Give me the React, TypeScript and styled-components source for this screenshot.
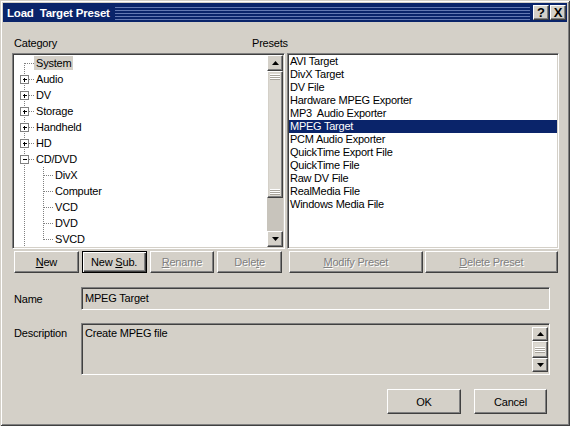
import React from 'react';
import styled, { createGlobalStyle, css } from 'styled-components';

const GlobalStyle = createGlobalStyle`
  html, body {
    margin: 0;
    padding: 0;
    background: #d4d0c8;
  }
  body {
    font-family: 'Liberation Sans', Arial, sans-serif;
    font-size: 11px;
    color: #000;
  }
  * {
    box-sizing: border-box;
  }
`;

const raised = css`
  border: 1px solid;
  border-color: #fff #404040 #404040 #fff;
  box-shadow: inset -1px -1px #808080, inset 1px 1px #d4d0c8;
`;

const sunken = css`
  border: 1px solid;
  border-color: #808080 #fff #fff #808080;
  box-shadow: inset 1px 1px #404040, inset -1px -1px #d4d0c8;
  padding: 1px;
`;

const Window = styled.div`
  width: 570px;
  height: 426px;
  padding: 3px;
  background: #d4d0c8;
  box-shadow: inset 1px 1px #d4d0c8, inset -1px -1px #404040,
    inset 2px 2px #fff, inset -2px -2px #808080;
  display: flex;
  flex-direction: column;
`;

const TitleBar = styled.div`
  height: 19px;
  background: #0a246a;
  display: flex;
  align-items: center;
  padding: 0 1px 0 4px;
`;

const TitleText = styled.span`
  color: #fff;
  font-weight: bold;
  font-size: 11.5px;
  letter-spacing: -0.2px;
  white-space: pre;
`;

const Stripes = styled.div`
  flex: 1;
  height: 14px;
  margin: 0 3px 0 5px;
  background: repeating-linear-gradient(
    to bottom,
    #0a246a 0,
    #0a246a 1px,
    #6479b2 1px,
    #6479b2 2px,
    #0a246a 2px,
    #0a246a 3px
  );
`;

const CaptionButtons = styled.div`
  display: flex;
  gap: 1px;
`;

const CaptionButton = styled.div`
  ${raised};
  width: 16px;
  height: 15px;
  background: #d4d0c8;
  display: flex;
  align-items: center;
  justify-content: center;
  font-weight: bold;
  font-size: 13px;
  line-height: 13px;
`;

const Body = styled.div`
  flex: 1;
  display: flex;
  flex-direction: column;
  padding: 15px 8px 0 9px;
`;

const LabelRow = styled.div`
  display: flex;
  height: 13px;
  line-height: 13px;
  margin-bottom: 3px;
`;

const Caption = styled.span<{ $width?: number; $indent?: number }>`
  letter-spacing: -0.2px;
  ${(p) => p.$width && `width: ${p.$width}px;`}
  margin-left: ${(p) => p.$indent ?? 0}px;
`;

const Panes = styled.div`
  display: flex;
  gap: 2px;
  height: 196px;
`;

const TreeBox = styled.div`
  ${sunken};
  width: 273px;
  background: #fff;
  display: flex;
`;

const TreeList = styled.div`
  flex: 1;
  overflow: hidden;
`;

const TreeRow = styled.div`
  height: 16px;
  display: flex;
  align-items: center;
`;

const TreeLabel = styled.span<{ $selected?: boolean }>`
  height: 14px;
  line-height: 14px;
  padding: 0 2px;
  letter-spacing: -0.2px;
  white-space: nowrap;
  background: ${(p) => (p.$selected ? '#d4d0c8' : 'transparent')};
`;

const ScrollBar = styled.div<{ $inset?: boolean }>`
  width: 16px;
  display: flex;
  flex-direction: column;
  background: #c8c4bc;
  ${(p) =>
    p.$inset &&
    css`
      margin-top: 2px;
      background: transparent;
    `}
`;

const ArrowButton = styled.div<{ $h?: number }>`
  ${raised};
  height: ${(p) => p.$h ?? 16}px;
  background: #d4d0c8;
  display: flex;
  align-items: center;
  justify-content: center;
  flex-shrink: 0;
`;

const grip = css`
  content: '';
  position: absolute;
  left: 2px;
  right: 2px;
  height: 6px;
  background: repeating-linear-gradient(
    to bottom,
    #fff 0,
    #fff 1px,
    #a8a49c 1px,
    #a8a49c 2px
  );
`;

const Thumb = styled.div<{ $h: number; $double?: boolean }>`
  ${raised};
  position: relative;
  height: ${(p) => p.$h}px;
  flex-shrink: 0;
  background: #dcd9d2;
  &::before {
    ${grip};
    top: ${(p) => (p.$double ? 2 : Math.round(p.$h / 2 - 4))}px;
  }
  ${(p) =>
    p.$double &&
    css`
      &::after {
        ${grip};
        bottom: 2px;
      }
    `}
`;

const Track = styled.div`
  flex: 1;
`;

const ListBox = styled.div`
  ${sunken};
  flex: 1;
  background: #fff;
`;

const ListItem = styled.div<{ $selected?: boolean }>`
  height: 13px;
  line-height: 13px;
  padding-left: 1px;
  letter-spacing: -0.25px;
  white-space: pre;
  background: ${(p) => (p.$selected ? '#0a246a' : 'transparent')};
  color: ${(p) => (p.$selected ? '#fff' : '#000')};
`;

const ButtonRow = styled.div`
  display: flex;
  gap: 2px;
  height: 22px;
  margin-top: 2px;
`;

const ButtonGroup = styled.div<{ $width: number; $gap: number; $pad: string }>`
  width: ${(p) => p.$width}px;
  display: flex;
  gap: ${(p) => p.$gap}px;
  padding: ${(p) => p.$pad};
`;

const Button = styled.div<{ $disabled?: boolean; $default?: boolean; $width?: number }>`
  ${raised};
  ${(p) => (p.$width ? `width: ${p.$width}px;` : 'flex: 1;')}
  background: #d4d0c8;
  display: flex;
  align-items: center;
  justify-content: center;
  letter-spacing: -0.2px;
  white-space: nowrap;
  color: ${(p) => (p.$disabled ? '#808080' : '#000')};
  text-shadow: ${(p) => (p.$disabled ? '1px 1px 0 #fff' : 'none')};
  ${(p) =>
    p.$default &&
    css`
      border-color: #000;
      box-shadow: inset 1px 1px #fff, inset -1px -1px #404040,
        inset -2px -2px #808080;
    `}
`;

const Mnemonic = styled.span`
  text-decoration: underline;
  text-decoration-thickness: 1px;
  text-underline-offset: 1px;
`;

const FieldRow = styled.div<{ $top: number; $height: number; $align: string }>`
  display: flex;
  align-items: ${(p) => p.$align};
  margin-top: ${(p) => p.$top}px;
  height: ${(p) => p.$height}px;
`;

const FieldLabel = styled.span<{ $pad?: number }>`
  width: 67px;
  margin-left: 2px;
  letter-spacing: -0.2px;
  padding-top: ${(p) => p.$pad ?? 0}px;
`;

const Field = styled.div`
  ${sunken};
  width: 469px;
  height: 100%;
  background: #d4d0c8;
  display: flex;
`;

const FieldText = styled.div<{ $padTop: number }>`
  flex: 1;
  padding: ${(p) => p.$padTop}px 2px 0 2px;
  letter-spacing: -0.2px;
`;

const Footer = styled.div`
  display: flex;
  justify-content: flex-end;
  gap: 13px;
  height: 25px;
  margin-top: 14px;
  padding-right: 12px;
`;

const Triangle = ({ down }: { down?: boolean }) => (
  <svg width="7" height="4" viewBox="0 0 7 4">
    <polygon points={down ? '0,0 7,0 3.5,4' : '0,4 7,4 3.5,0'} fill="#000" />
  </svg>
);

type Node = {
  label: string;
  level: 1 | 2;
  expander?: 'plus' | 'minus';
  first?: boolean;
  last?: boolean;
  selected?: boolean;
};

const tree: Node[] = [
  { label: 'System', level: 1, first: true, selected: true },
  { label: 'Audio', level: 1, expander: 'plus' },
  { label: 'DV', level: 1, expander: 'plus' },
  { label: 'Storage', level: 1, expander: 'plus' },
  { label: 'Handheld', level: 1, expander: 'plus' },
  { label: 'HD', level: 1, expander: 'plus' },
  { label: 'CD/DVD', level: 1, expander: 'minus' },
  { label: 'DivX', level: 2 },
  { label: 'Computer', level: 2 },
  { label: 'VCD', level: 2 },
  { label: 'DVD', level: 2 },
  { label: 'SVCD', level: 2, last: true },
  { label: 'Web', level: 1, expander: 'plus' },
];

const dot = { stroke: '#808080', strokeDasharray: '1 1', shapeRendering: 'crispEdges' as const };

// dotted tree connectors drawn per row so the lines stay continuous
const Connector = ({ node }: { node: Node }) => {
  const w = node.level === 1 ? 20 : 39;
  return (
    <svg width={w} height="16" viewBox={`0 0 ${w} 16`} style={{ flexShrink: 0 }}>
      <line x1="10.5" y1={node.first ? 8 : 0} x2="10.5" y2="16" {...dot} />
      {node.level === 1 && (
        <line x1={node.expander ? 15 : 11} y1="8.5" x2="20" y2="8.5" {...dot} />
      )}
      {node.level === 2 && (
        <>
          <line x1="29.5" y1="0" x2="29.5" y2={node.last ? 9 : 16} {...dot} />
          <line x1="30" y1="8.5" x2="39" y2="8.5" {...dot} />
        </>
      )}
      {node.expander && (
        <g shapeRendering="crispEdges">
          <rect x="6.5" y="4.5" width="8" height="8" fill="#fff" stroke="#808080" />
          <line x1="8.5" y1="8.5" x2="12.5" y2="8.5" stroke="#000" />
          {node.expander === 'plus' && (
            <line x1="10.5" y1="6.5" x2="10.5" y2="10.5" stroke="#000" />
          )}
        </g>
      )}
    </svg>
  );
};

const presets = [
  'AVI Target',
  'DivX Target',
  'DV File',
  'Hardware MPEG Exporter',
  'MP3  Audio Exporter',
  'MPEG Target',
  'PCM Audio Exporter',
  'QuickTime Export File',
  'QuickTime File',
  'Raw DV File',
  'RealMedia File',
  'Windows Media File',
];

export default function App() {
  return (
    <>
      <GlobalStyle />
      <Window>
        <TitleBar>
          <TitleText>Load  Target Preset</TitleText>
          <Stripes />
          <CaptionButtons>
            <CaptionButton>?</CaptionButton>
            <CaptionButton>X</CaptionButton>
          </CaptionButtons>
        </TitleBar>
        <Body>
          <LabelRow>
            <Caption $width={238} $indent={2}>
              Category
            </Caption>
            <Caption>Presets</Caption>
          </LabelRow>
          <Panes>
            <TreeBox>
              <TreeList>
                {tree.map((n) => (
                  <TreeRow key={n.label}>
                    <Connector node={n} />
                    <TreeLabel $selected={n.selected}>{n.label}</TreeLabel>
                  </TreeRow>
                ))}
              </TreeList>
              <ScrollBar>
                <ArrowButton>
                  <Triangle />
                </ArrowButton>
                <Thumb $h={127} $double />
                <Track />
                <ArrowButton>
                  <Triangle down />
                </ArrowButton>
              </ScrollBar>
            </TreeBox>
            <ListBox>
              {presets.map((p) => (
                <ListItem key={p} $selected={p === 'MPEG Target'}>
                  {p}
                </ListItem>
              ))}
            </ListBox>
          </Panes>
          <ButtonRow>
            <ButtonGroup $width={273} $gap={3} $pad="0 3px 0 2px">
              <Button>
                <span>
                  <Mnemonic>N</Mnemonic>ew
                </span>
              </Button>
              <Button $default>
                <span>
                  New <Mnemonic>S</Mnemonic>ub.
                </span>
              </Button>
              <Button $disabled>
                <span>
                  <Mnemonic>R</Mnemonic>ename
                </span>
              </Button>
              <Button $disabled>
                <span>
                  Dele<Mnemonic>t</Mnemonic>e
                </span>
              </Button>
            </ButtonGroup>
            <ButtonGroup $width={272} $gap={2} $pad="0 1px 0 2px">
              <Button $disabled>
                <span>
                  <Mnemonic>M</Mnemonic>odify Preset
                </span>
              </Button>
              <Button $disabled>
                <span>
                  <Mnemonic>D</Mnemonic>elete Preset
                </span>
              </Button>
            </ButtonGroup>
          </ButtonRow>
          <FieldRow $top={14} $height={23} $align="center">
            <FieldLabel>Name</FieldLabel>
            <Field>
              <FieldText $padTop={3}>MPEG Target</FieldText>
            </Field>
          </FieldRow>
          <FieldRow $top={13} $height={52} $align="flex-start">
            <FieldLabel $pad={4}>Description</FieldLabel>
            <Field>
              <FieldText $padTop={2}>Create MPEG file</FieldText>
              <ScrollBar $inset>
                <ArrowButton $h={14}>
                  <Triangle />
                </ArrowButton>
                <Thumb $h={17} />
                <ArrowButton $h={14}>
                  <Triangle down />
                </ArrowButton>
              </ScrollBar>
            </Field>
          </FieldRow>
          <Footer>
            <Button $width={74}>OK</Button>
            <Button $width={73}>Cancel</Button>
          </Footer>
        </Body>
      </Window>
    </>
  );
}
